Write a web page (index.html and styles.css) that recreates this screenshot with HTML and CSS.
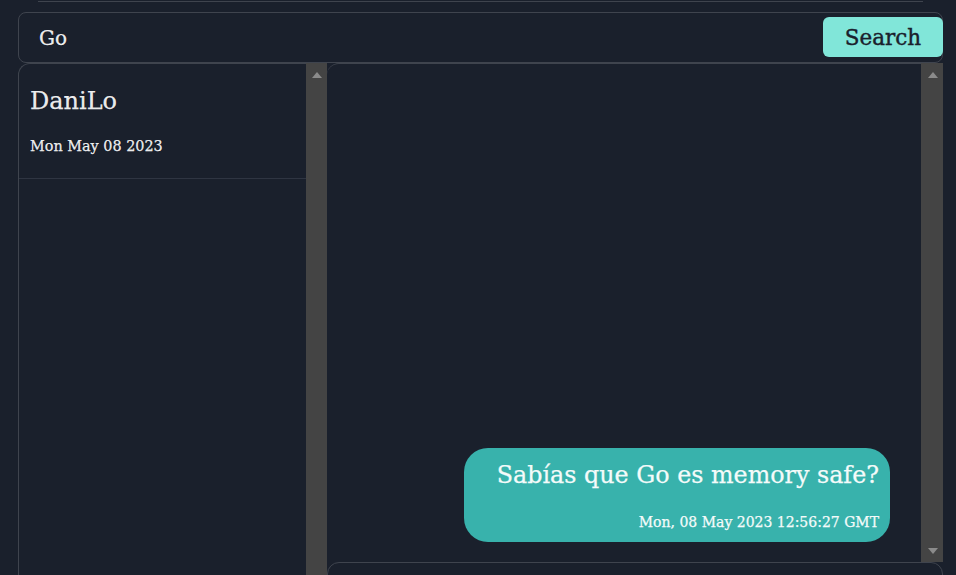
FILE: index.html
```html
<!DOCTYPE html>
<html lang="es">
<head>
<meta charset="utf-8">
<title>Chat</title>
<link rel="stylesheet" href="styles.css">
</head>
<body>
<div class="topline"></div>
<form class="search">
  <div class="query">Go</div>
  <button class="search-btn" type="button">Search</button>
</form>
<div class="main">
  <aside class="contacts">
    <div class="contact-list">
      <div class="contact">
        <div class="contact-name">DaniLo</div>
        <div class="contact-date">Mon May 08 2023</div>
      </div>
    </div>
    <div class="scrollbar">
      <span class="arrow-up"></span>
    </div>
  </aside>
  <section class="chat">
    <div class="messages-wrap">
      <div class="messages">
        <div class="bubble">
          <div class="bubble-text">Sabías que Go es memory safe?</div>
          <div class="bubble-time">Mon, 08 May 2023 12:56:27 GMT</div>
        </div>
      </div>
      <div class="scrollbar scrollbar-wide">
        <span class="arrow-up"></span>
        <span class="arrow-down"></span>
      </div>
    </div>
    <div class="composer"></div>
  </section>
</div>
</body>
</html>
```
FILE: styles.css
```css
* { box-sizing: border-box; }
html, body {
  margin: 0;
  padding: 0;
  background: #1a202c;
  overflow: hidden;
  height: 100%;
}
body {
  font-family: "DejaVu Serif", "Liberation Serif", serif;
  color: rgba(255, 255, 255, 0.92);
  -webkit-text-stroke: 0.25px currentColor;
}
.topline {
  height: 1px;
  margin: 1px 33px 0 38px;
  background: #3f444e;
}
.search {
  position: relative;
  margin: 10px 13px 0 18px;
  height: 51px;
  border: 1px solid #3f444e;
  border-radius: 8px;
  display: flex;
  align-items: center;
  padding-left: 20px;
}
.query {
  font-size: 20px;
  line-height: 48px;
  color: rgba(255, 255, 255, 0.92);
}
.search-btn {
  position: absolute;
  right: -1px;
  top: 4px;
  width: 120px;
  height: 40px;
  border: none;
  border-radius: 6px;
  background: #81e6d9;
  color: #1a202c;
  font-family: "DejaVu Serif", "Liberation Serif", serif;
  font-size: 21.5px;
  line-height: 38px;
  padding: 2px 0 0;
  -webkit-text-stroke: 0.4px currentColor;
}
.main {
  display: flex;
  margin: 0 13px 0 18px;
  height: 560px;
}
.contacts {
  width: 309px;
  display: flex;
}
.contact-list {
  flex: 1;
  border-left: 1px solid #3f444e;
  border-top: 1px solid #3f444e;
  border-top-left-radius: 12px;
}
.contact {
  padding: 21px 12px 0 11px;
  height: 115px;
  border-bottom: 1px solid #2f3542;
}
.contact-name {
  font-size: 24px;
  line-height: 32px;
}
.contact-date {
  margin-top: 17px;
  font-size: 14.4px;
  line-height: 24px;
}
.scrollbar {
  width: 21px;
  background: #444444;
  display: flex;
  flex-direction: column;
  align-items: center;
  justify-content: space-between;
  padding: 9px 0 8px 1px;
}
.scrollbar-wide {
  width: 22px;
}
.arrow-up {
  width: 0;
  height: 0;
  border-left: 5px solid transparent;
  border-right: 5px solid transparent;
  border-bottom: 6px solid #8b8b8b;
}
.arrow-down {
  width: 0;
  height: 0;
  border-left: 5px solid transparent;
  border-right: 5px solid transparent;
  border-top: 6px solid #8b8b8b;
}
.chat {
  flex: 1;
  display: flex;
  flex-direction: column;
}
.messages-wrap {
  height: 499px;
  display: flex;
}
.messages {
  flex: 1;
  border-top: 1px solid #3f444e;
  border-top-left-radius: 12px;
  display: flex;
  flex-direction: column;
  justify-content: flex-end;
  align-items: flex-end;
  padding: 0 31px 20px 0;
}
.bubble {
  width: 426px;
  background: #38b2ac;
  border-radius: 24px;
  padding: 9px 11px 10px 12px;
  text-align: right;
  color: #f4fbfa;
}
.bubble-text {
  font-size: 23.8px;
  line-height: 36px;
}
.bubble-time {
  margin-top: 19px;
  font-size: 14px;
  line-height: 20px;
}
.composer {
  flex: 1;
  border: 1px solid #3f444e;
  border-radius: 12px;
}
```
